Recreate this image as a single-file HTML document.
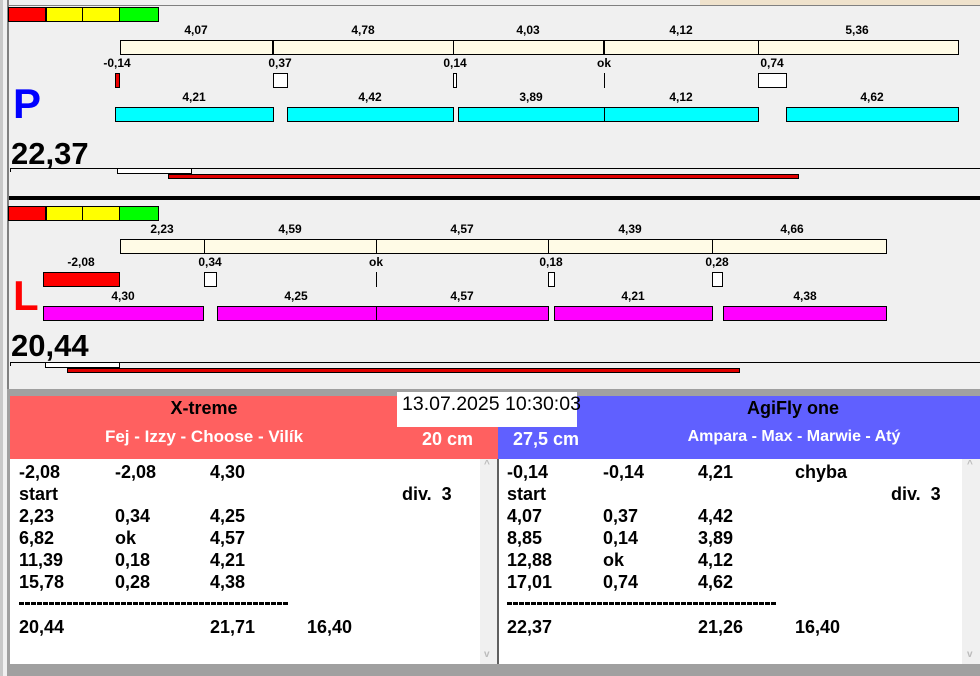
<!DOCTYPE html>
<html><head><meta charset="utf-8">
<style>
*{margin:0;padding:0;box-sizing:border-box}
body{width:980px;height:676px;background:#f0f0f0;position:relative;overflow:hidden;font-family:"Liberation Sans",Arial,sans-serif;font-weight:bold;color:#000}
div{position:absolute}
.l{font-size:12px;transform:translateX(-50%);white-space:nowrap;line-height:14px}
.b{border:1px solid #000}
.t{font-size:18px;line-height:22px;white-space:nowrap}
.d{height:3px;background:repeating-linear-gradient(90deg,#000 0 5px,transparent 5px 6px)}
</style></head><body>
<div style="left:0;top:0;width:3px;height:676px;background:#c8c8c8"></div>
<div style="left:7px;top:0;width:2px;height:390px;background:#808080"></div>
<div style="left:700px;top:0;width:280px;height:5px;background:#efe2cc"></div>
<div style="left:9px;top:5px;width:971px;height:1px;background:#808080"></div>

<!-- TOP PANEL P -->
<div style="left:8px;top:7px;width:38px;height:15px;background:#f00;border:1px solid #000"></div>
<div style="left:46px;top:7px;width:37px;height:15px;background:#ff0;border:1px solid #000"></div>
<div style="left:82px;top:7px;width:38px;height:15px;background:#ff0;border:1px solid #000"></div>
<div style="left:119px;top:7px;width:40px;height:15px;background:#0f0;border:1px solid #000"></div>

<div class="l" style="left:196px;top:23px">4,07</div>
<div class="l" style="left:363px;top:23px">4,78</div>
<div class="l" style="left:528px;top:23px">4,03</div>
<div class="l" style="left:681px;top:23px">4,12</div>
<div class="l" style="left:857px;top:23px">5,36</div>
<div class="b" style="left:120px;top:40px;width:839px;height:15px;background:#fffbe6"></div>
<div style="left:272px;top:40px;width:2px;height:15px;background:#000"></div>
<div style="left:453px;top:40px;width:1px;height:15px;background:#000"></div>
<div style="left:603px;top:40px;width:2px;height:15px;background:#000"></div>
<div style="left:758px;top:40px;width:1px;height:15px;background:#000"></div>

<div class="l" style="left:117px;top:56px">-0,14</div>
<div class="l" style="left:280px;top:56px">0,37</div>
<div class="l" style="left:455px;top:56px">0,14</div>
<div class="l" style="left:604px;top:56px">ok</div>
<div class="l" style="left:772px;top:56px">0,74</div>
<div class="b" style="left:115px;top:73px;width:5px;height:15px;background:#e00"></div>
<div class="b" style="left:273px;top:73px;width:15px;height:15px;background:#fff"></div>
<div class="b" style="left:453px;top:73px;width:4px;height:15px;background:#fff"></div>
<div style="left:604px;top:73px;width:1px;height:15px;background:#000"></div>
<div class="b" style="left:758px;top:73px;width:29px;height:15px;background:#fff"></div>

<div style="left:13px;top:80px;font-size:42px;color:#0000ff;line-height:48px">P</div>
<div class="l" style="left:194px;top:90px">4,21</div>
<div class="l" style="left:370px;top:90px">4,42</div>
<div class="l" style="left:531px;top:90px">3,89</div>
<div class="l" style="left:681px;top:90px">4,12</div>
<div class="l" style="left:872px;top:90px">4,62</div>
<div class="b" style="left:115px;top:107px;width:159px;height:15px;background:#0ff"></div>
<div class="b" style="left:287px;top:107px;width:167px;height:15px;background:#0ff"></div>
<div class="b" style="left:458px;top:107px;width:147px;height:15px;background:#0ff"></div>
<div class="b" style="left:604px;top:107px;width:155px;height:15px;background:#0ff"></div>
<div class="b" style="left:786px;top:107px;width:173px;height:15px;background:#0ff"></div>

<div style="left:11px;top:136px;font-size:31px;line-height:36px">22,37</div>
<div style="left:10px;top:168px;width:970px;height:1px;background:#000"></div>
<div style="left:10px;top:168px;width:1px;height:4px;background:#000"></div>
<div class="b" style="left:117px;top:168px;width:75px;height:6px;background:#fff"></div>
<div class="b" style="left:168px;top:174px;width:631px;height:5px;background:#e00000"></div>
<div style="left:9px;top:196px;width:971px;height:4px;background:#000"></div>

<!-- SECOND PANEL L -->
<div style="left:8px;top:206px;width:38px;height:15px;background:#f00;border:1px solid #000"></div>
<div style="left:46px;top:206px;width:37px;height:15px;background:#ff0;border:1px solid #000"></div>
<div style="left:82px;top:206px;width:38px;height:15px;background:#ff0;border:1px solid #000"></div>
<div style="left:119px;top:206px;width:40px;height:15px;background:#0f0;border:1px solid #000"></div>

<div class="l" style="left:162px;top:222px">2,23</div>
<div class="l" style="left:290px;top:222px">4,59</div>
<div class="l" style="left:462px;top:222px">4,57</div>
<div class="l" style="left:630px;top:222px">4,39</div>
<div class="l" style="left:792px;top:222px">4,66</div>
<div class="b" style="left:120px;top:239px;width:767px;height:15px;background:#fffbe6"></div>
<div style="left:204px;top:239px;width:1px;height:15px;background:#000"></div>
<div style="left:376px;top:239px;width:1px;height:15px;background:#000"></div>
<div style="left:548px;top:239px;width:1px;height:15px;background:#000"></div>
<div style="left:712px;top:239px;width:1px;height:15px;background:#000"></div>

<div class="l" style="left:81px;top:255px">-2,08</div>
<div class="l" style="left:210px;top:255px">0,34</div>
<div class="l" style="left:376px;top:255px">ok</div>
<div class="l" style="left:551px;top:255px">0,18</div>
<div class="l" style="left:717px;top:255px">0,28</div>
<div class="b" style="left:43px;top:272px;width:77px;height:15px;background:#f00"></div>
<div class="b" style="left:204px;top:272px;width:13px;height:15px;background:#fff"></div>
<div style="left:376px;top:272px;width:1px;height:15px;background:#000"></div>
<div class="b" style="left:548px;top:272px;width:7px;height:15px;background:#fff"></div>
<div class="b" style="left:712px;top:272px;width:11px;height:15px;background:#fff"></div>

<div style="left:13px;top:272px;font-size:42px;color:#f00;line-height:48px">L</div>
<div class="l" style="left:123px;top:289px">4,30</div>
<div class="l" style="left:296px;top:289px">4,25</div>
<div class="l" style="left:462px;top:289px">4,57</div>
<div class="l" style="left:633px;top:289px">4,21</div>
<div class="l" style="left:805px;top:289px">4,38</div>
<div class="b" style="left:43px;top:306px;width:161px;height:15px;background:#f0f"></div>
<div class="b" style="left:217px;top:306px;width:160px;height:15px;background:#f0f"></div>
<div class="b" style="left:376px;top:306px;width:173px;height:15px;background:#f0f"></div>
<div class="b" style="left:554px;top:306px;width:159px;height:15px;background:#f0f"></div>
<div class="b" style="left:723px;top:306px;width:164px;height:15px;background:#f0f"></div>

<div style="left:11px;top:328px;font-size:31px;line-height:36px">20,44</div>
<div style="left:10px;top:362px;width:970px;height:1px;background:#000"></div>
<div style="left:10px;top:362px;width:1px;height:4px;background:#000"></div>
<div class="b" style="left:45px;top:362px;width:75px;height:6px;background:#fff"></div>
<div class="b" style="left:67px;top:368px;width:673px;height:5px;background:#e00000"></div>

<!-- BOTTOM -->
<div style="left:7px;top:389px;width:973px;height:287px;background:#a0a0a0"></div>
<div style="left:10px;top:396px;width:488px;height:63px;background:#ff6060"></div>
<div style="left:498px;top:396px;width:482px;height:63px;background:#6060ff"></div>
<div style="left:397px;top:392px;width:180px;height:35px;background:#fff;font-weight:normal;font-size:19.5px;line-height:24px;padding-left:5px;white-space:nowrap">13.07.2025 10:30:03</div>
<div style="left:204px;top:397px;transform:translateX(-50%);font-size:18px;line-height:22px">X-treme</div>
<div style="left:204px;top:427px;transform:translateX(-50%);font-size:17px;color:#fff;white-space:nowrap;line-height:20px">Fej - Izzy - Choose - Vilík</div>
<div style="left:422px;top:428px;font-size:18px;color:#fff;line-height:22px">20 cm</div>
<div style="left:513px;top:428px;font-size:18px;color:#fff;line-height:22px">27,5 cm</div>
<div style="left:793px;top:397px;transform:translateX(-50%);font-size:18px;line-height:22px">AgiFly one</div>
<div style="left:794px;top:427px;transform:translateX(-50%);font-size:16px;color:#fff;white-space:nowrap;line-height:20px">Ampara - Max - Marwie - Atý</div>

<div style="left:10px;top:459px;width:488px;height:205px;background:#fff"></div>
<div style="left:480px;top:459px;width:17px;height:205px;background:#f0f0f0;color:#bbb;font-size:10px;text-align:center">
<div style="left:4px;top:0">^</div><div style="left:4px;top:190px">v</div></div>
<div style="left:497px;top:459px;width:2px;height:205px;background:#606060"></div>
<div style="left:499px;top:459px;width:481px;height:205px;background:#fff"></div>
<div style="left:962px;top:459px;width:18px;height:205px;background:#f0f0f0;color:#bbb;font-size:10px"><div style="left:5px;top:0">^</div><div style="left:5px;top:190px">v</div></div>

<div class="t" style="left:19px;top:461px">-2,08</div><div class="t" style="left:115px;top:461px">-2,08</div><div class="t" style="left:210px;top:461px">4,30</div>
<div class="t" style="left:19px;top:483px">start</div><div class="t" style="left:402px;top:483px">div.&nbsp; 3</div>
<div class="t" style="left:19px;top:505px">2,23</div><div class="t" style="left:115px;top:505px">0,34</div><div class="t" style="left:210px;top:505px">4,25</div>
<div class="t" style="left:19px;top:527px">6,82</div><div class="t" style="left:115px;top:527px">ok</div><div class="t" style="left:210px;top:527px">4,57</div>
<div class="t" style="left:19px;top:549px">11,39</div><div class="t" style="left:115px;top:549px">0,18</div><div class="t" style="left:210px;top:549px">4,21</div>
<div class="t" style="left:19px;top:571px">15,78</div><div class="t" style="left:115px;top:571px">0,28</div><div class="t" style="left:210px;top:571px">4,38</div>
<div class="d" style="left:19px;top:602px;width:269px"></div>
<div class="t" style="left:19px;top:616px">20,44</div><div class="t" style="left:210px;top:616px">21,71</div><div class="t" style="left:307px;top:616px">16,40</div>

<div class="t" style="left:507px;top:461px">-0,14</div><div class="t" style="left:603px;top:461px">-0,14</div><div class="t" style="left:698px;top:461px">4,21</div><div class="t" style="left:795px;top:461px">chyba</div>
<div class="t" style="left:507px;top:483px">start</div><div class="t" style="left:891px;top:483px">div.&nbsp; 3</div>
<div class="t" style="left:507px;top:505px">4,07</div><div class="t" style="left:603px;top:505px">0,37</div><div class="t" style="left:698px;top:505px">4,42</div>
<div class="t" style="left:507px;top:527px">8,85</div><div class="t" style="left:603px;top:527px">0,14</div><div class="t" style="left:698px;top:527px">3,89</div>
<div class="t" style="left:507px;top:549px">12,88</div><div class="t" style="left:603px;top:549px">ok</div><div class="t" style="left:698px;top:549px">4,12</div>
<div class="t" style="left:507px;top:571px">17,01</div><div class="t" style="left:603px;top:571px">0,74</div><div class="t" style="left:698px;top:571px">4,62</div>
<div class="d" style="left:507px;top:602px;width:269px"></div>
<div class="t" style="left:507px;top:616px">22,37</div><div class="t" style="left:698px;top:616px">21,26</div><div class="t" style="left:795px;top:616px">16,40</div>
</body></html>
